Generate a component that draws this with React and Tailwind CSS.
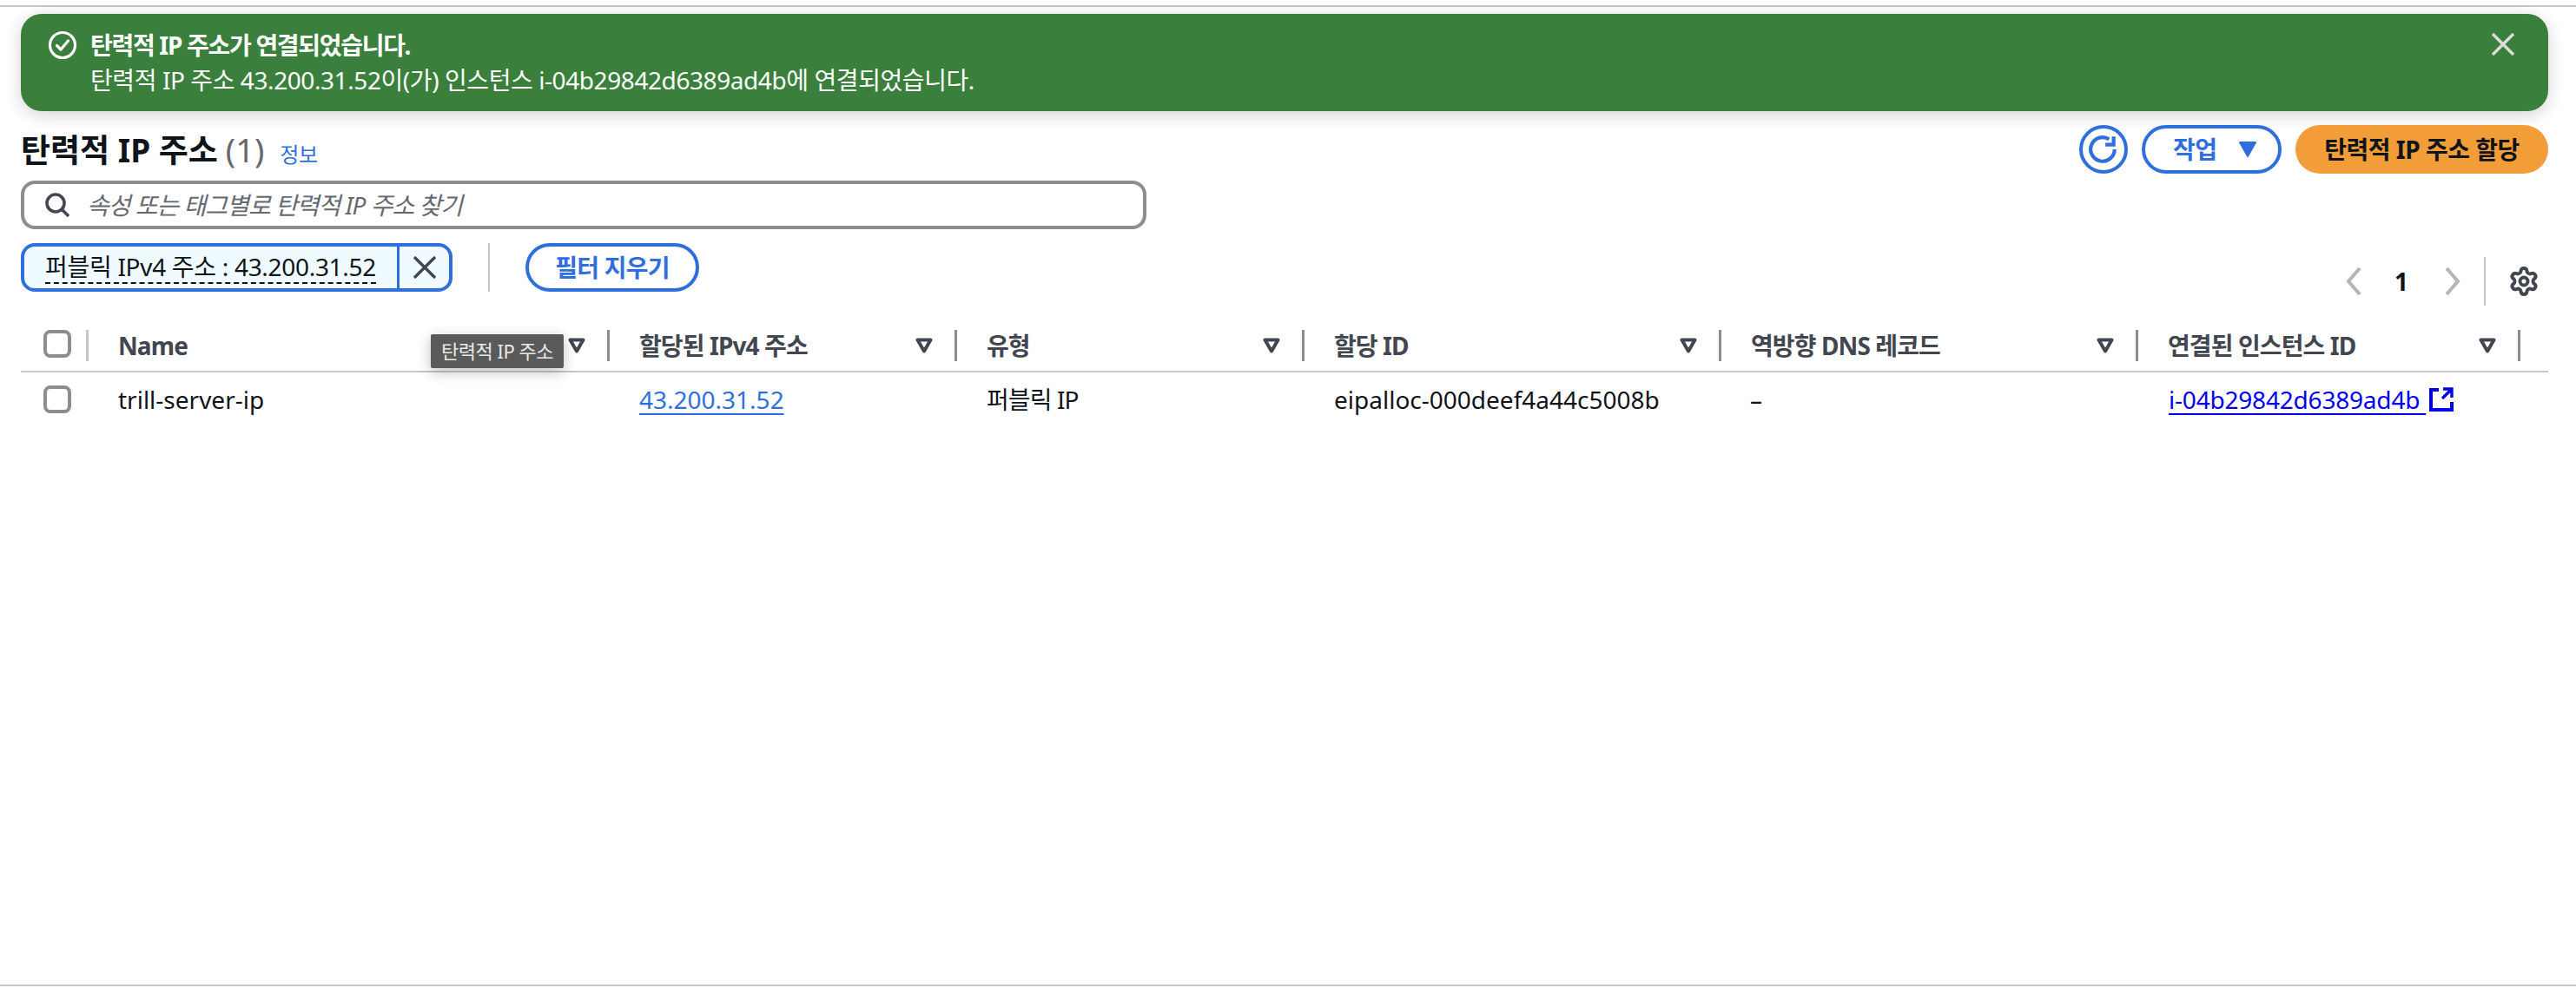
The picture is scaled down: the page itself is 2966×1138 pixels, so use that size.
import React from "react";
import { Settings } from "lucide-react";

const SortIcon = () => (
  <svg width="20" height="18" viewBox="0 0 20 18" className="shrink-0">
    <path d="M2.5 2.5h15L10 15.5z" fill="none" stroke="#414750" strokeWidth="4" strokeLinejoin="round" />
  </svg>
);

const Checkbox = () => (
  <div className="h-8 w-8 shrink-0 rounded-[8px] border-[4px] border-[#8c8c94] bg-white" />
);

const columns = ["Name", "할당된 IPv4 주소", "유형", "할당 ID", "역방향 DNS 레코드", "연결된 인스턴스 ID"];

function HeaderCell({ label, first }) {
  return (
    <div className={`flex h-9 items-center justify-between pr-[25px] ${first ? "pl-[34px]" : "pl-[34px]"} border-r-[3px] border-[#8c8c94]`}>
      <span className="whitespace-nowrap text-[28px] font-bold leading-9 tracking-[-0.9px] text-[#424650]">{label}</span>
      <SortIcon />
    </div>
  );
}

export default function App() {
  return (
    <div className="relative flex h-[1138px] w-[2966px] flex-col overflow-hidden bg-white font-['Noto_Sans','Noto_Sans_CJK_KR',sans-serif] text-[28px] text-[#0f141a]">
      <div className="mt-[6px] h-[2px] w-full bg-[#c6c6cd]" />

      <div className="flex flex-1 flex-col pl-[24px] pr-[32px]">
        {/* flash banner */}
        <div className="mt-[8px] flex h-[112px] items-start justify-between rounded-[24px] bg-[#3a7f3c] pl-[31px] pr-[39px] text-white shadow-[0_4px_20px_rgba(0,7,22,0.18)]">
          <div className="flex items-start">
            <svg width="34" height="34" viewBox="0 0 34 34" className="mt-[19px]" fill="none" stroke="white" strokeWidth="3.2">
              <circle cx="17" cy="17" r="14.5" />
              <path d="M10.5 17.5l4.5 4.5 8.5-10" strokeLinecap="round" strokeLinejoin="round" />
            </svg>
            <div className="ml-[15px] pt-[16px] leading-[40px]">
              <div className="font-bold tracking-[-1.3px]">탄력적 IP 주소가 연결되었습니다.</div>
              <div className="tracking-[-0.42px]">탄력적 IP 주소 43.200.31.52이(가) 인스턴스 i-04b29842d6389ad4b에 연결되었습니다.</div>
            </div>
          </div>
          <svg width="26" height="26" viewBox="0 0 26 26" className="mt-[22px]" stroke="#dcdcdc" strokeWidth="3.4">
            <path d="M1 1l24 24M25 1L1 25" />
          </svg>
        </div>

        {/* heading */}
        <div className="mt-[16px] flex h-[56px] items-center justify-between">
          <div className="flex items-baseline">
            <h1 className="text-[37px] font-bold leading-[48px]">탄력적 IP 주소</h1>
            <span className="ml-[9px] text-[38px] leading-[48px] text-[#656871]">(1)</span>
            <a className="ml-[18px] text-[24px] tracking-[-0.5px] text-[#2f6fdd]">정보</a>
          </div>
          <div className="flex items-center gap-[16px]">
            <button className="flex h-[56px] w-[56px] items-center justify-center rounded-full border-[4px] border-[#2f6fdd]">
              <svg width="36" height="36" viewBox="0 0 34 34" fill="none" stroke="#2f6fdd" strokeWidth="4">
                <path d="M29 17a13 13 0 1 1-6-11" />
                <path d="M28 3v9h-9" />
              </svg>
            </button>
            <button className="flex h-[56px] w-[161px] items-center rounded-full border-[4px] border-[#2f6fdd] pl-[32px] font-bold tracking-[-0.5px] text-[#2f6fdd]">
              작업
              <svg width="22" height="20" viewBox="0 0 22 20" className="ml-[24px]" fill="#2f6fdd" stroke="#2f6fdd" strokeWidth="2" strokeLinejoin="round">
                <path d="M2 2h18L11 18z" />
              </svg>
            </button>
            <button className="flex h-[56px] w-[291px] items-center justify-center rounded-full bg-[#f29d38] font-bold tracking-[-0.5px]">
              탄력적 IP 주소 할당
            </button>
          </div>
        </div>

        {/* search */}
        <div className="mt-[8px] flex h-[56px] w-[1296px] items-center rounded-[16px] border-[4px] border-[#8c8c94] pl-[23px]">
          <svg width="30" height="30" viewBox="0 0 30 30" fill="none" stroke="#424650" strokeWidth="3.6">
            <circle cx="13" cy="13" r="10" />
            <path d="M20 20l8 8" />
          </svg>
          <span className="ml-[19px] italic tracking-[-1px] text-[#656871]">속성 또는 태그별로 탄력적 IP 주소 찾기</span>
        </div>

        {/* filter + pagination */}
        <div className="mt-[16px] flex h-[72px] justify-between">
          <div className="flex h-[56px] items-center">
            <div className="flex h-[56px] w-[497px] items-stretch rounded-[16px] border-[4px] border-[#2f6fdd] bg-[#f0fbff]">
              <div className="flex w-[432px] items-center justify-center border-r-[3px] border-[#2f6fdd]">
                <span className="whitespace-nowrap border-b-[2px] border-dashed border-[#0f141a] leading-[36px] tracking-[-0.3px]">퍼블릭 IPv4 주소 : 43.200.31.52</span>
              </div>
              <div className="flex flex-1 items-center justify-center">
                <svg width="26" height="26" viewBox="0 0 26 26" stroke="#424650" strokeWidth="3.4">
                  <path d="M1 1l24 24M25 1L1 25" />
                </svg>
              </div>
            </div>
            <div className="ml-[41px] h-[56px] w-[2px] bg-[#c6c6cd]" />
            <button className="ml-[41px] flex h-[56px] w-[200px] items-center justify-center rounded-full border-[4px] border-[#2f6fdd] font-bold tracking-[-0.8px] text-[#2f6fdd]">
              필터 지우기
            </button>
          </div>
          <div className="flex h-[56px] items-center self-end">
            <svg width="18" height="34" viewBox="0 0 18 34" fill="none" stroke="#b4b4bb" strokeWidth="4">
              <path d="M16 2L3 17l13 15" />
            </svg>
            <span className="ml-[38px] w-[16px] text-center font-bold">1</span>
            <svg width="18" height="34" viewBox="0 0 18 34" className="ml-[42px]" fill="none" stroke="#b4b4bb" strokeWidth="4">
              <path d="M2 2l13 15L2 32" />
            </svg>
            <div className="ml-[27px] h-[56px] w-[2px] bg-[#c6c6cd]" />
            <Settings size={36} color="#424650" strokeWidth={2.6} className="ml-[26px] mr-[10px]" />
          </div>
        </div>

        {/* table */}
        <div className="mt-[28px]">
          <div className="grid grid-cols-[78px_600px_400px_400px_480px_480px_440px_32px] border-b-[2px] border-[#c6c6cd] pb-[11px]">
            <div className="flex h-9 items-start border-r-[3px] border-[#c6c6cd] pl-[26px]">
              <Checkbox />
            </div>
            {columns.map((c, i) => (
              <HeaderCell key={c} label={c} first={i === 0} />
            ))}
          </div>
          <div className="grid h-[62px] grid-cols-[78px_600px_400px_400px_480px_480px_440px_32px] items-center">
            <div className="pl-[26px]">
              <Checkbox />
            </div>
            <div className="pl-[34px]">trill-server-ip</div>
            <div className="pl-[34px]">
              <a className="text-[#2f6fdd] underline underline-offset-[5px]">43.200.31.52</a>
            </div>
            <div className="pl-[34px] tracking-[-0.9px]">퍼블릭 IP</div>
            <div className="pl-[34px]">eipalloc-000deef4a44c5008b</div>
            <div className="pl-[33px]">–</div>
            <div className="flex items-center pl-[35px] text-[#0000ee]">
              <a className="whitespace-pre tracking-[-0.2px] underline underline-offset-[5px]">i-04b29842d6389ad4b </a>
              <svg width="28" height="28" viewBox="0 0 28 28" className="ml-[4px]" fill="none" stroke="#0000ee" strokeWidth="4">
                <path d="M11 3H2v23h24v-9" />
                <path d="M15 13L25 3M16 2h10v10" strokeWidth="3.4" />
              </svg>
            </div>
            <div />
          </div>
        </div>

        {/* tooltip */}
        <div className="absolute left-[496px] top-[385px] flex h-[39px] w-[153px] items-center justify-center rounded-[2px] bg-[#5a5a5a] text-[22px] tracking-[-0.5px] text-[#e9e9e9] shadow-[0_4px_16px_rgba(0,0,0,0.25)]">
          탄력적 IP 주소
        </div>
      </div>

      <div className="mb-[2px] h-[2px] w-full bg-[#c6c6cd]" />
    </div>
  );
}
